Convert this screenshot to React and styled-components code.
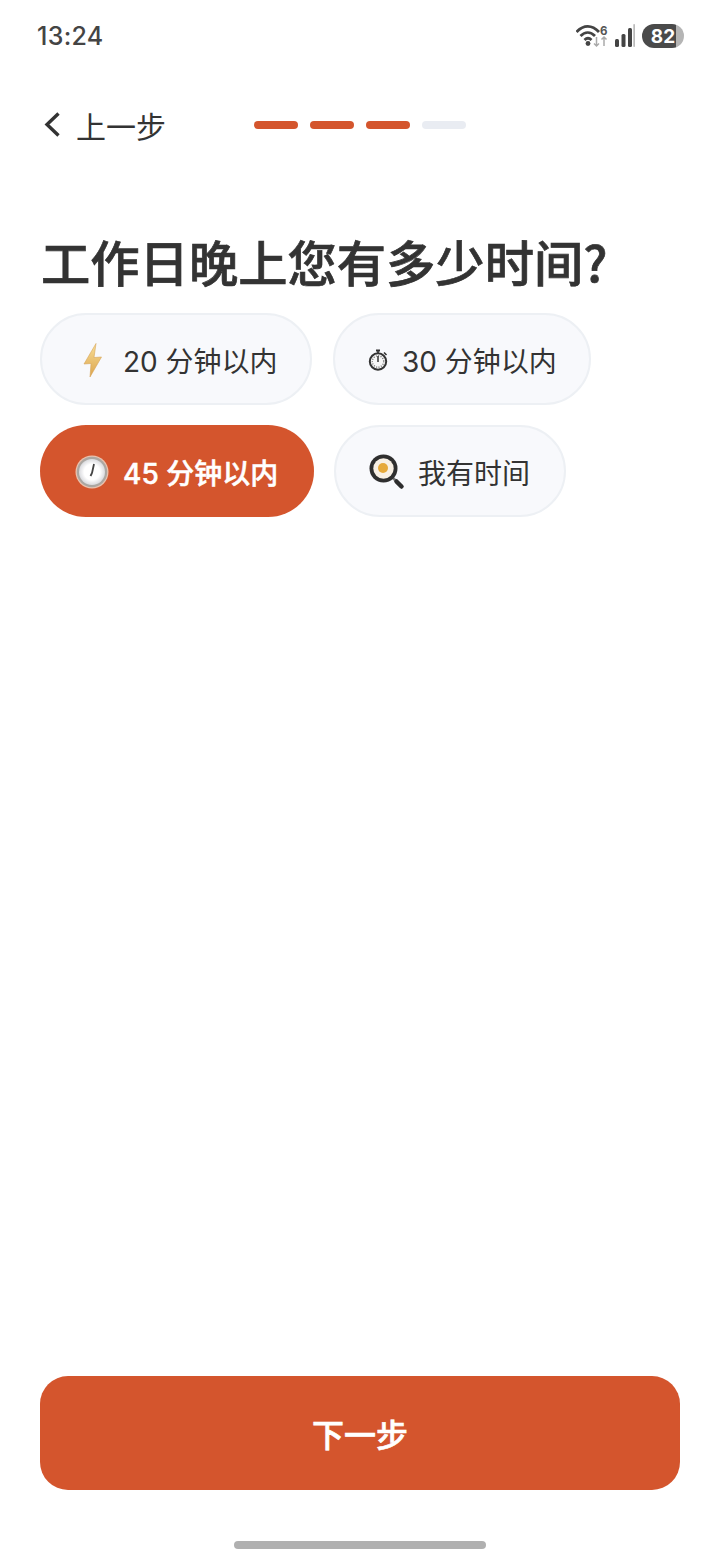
import React from "react";
import styled, { createGlobalStyle } from "styled-components";

const Global = createGlobalStyle`
  html, body { margin: 0; padding: 0; background: #fff; }
  #root { width: 720px; height: 1560px; }
`;
const CJK = `"Noto Sans CJK SC", "Noto Sans", sans-serif`;
const Page = styled.div`
  width: 720px; height: 1560px; display: flex; flex-direction: column; background: #fff;
  font-family: "Inter", ${CJK}; color: #333; box-sizing: border-box;
`;
const StatusBar = styled.div`
  height: 72px; padding: 0 36px 0 37px; display: flex; align-items: center; justify-content: space-between; flex-shrink: 0;
`;
const Time = styled.div`font: 500 25px "Inter", sans-serif; color: #444; letter-spacing: 0.3px;`;
const StatusIcons = styled.div`display: flex; align-items: center; gap: 7px;`;
const Battery = styled.div`
  width: 42px; height: 24px; border-radius: 12px; display: flex; align-items: center; justify-content: center;
  background: linear-gradient(90deg, #4a4a4a 82%, #b5b5b5 82%);
  color: #fff; font: 700 19px "Inter", sans-serif;
`;
const Header = styled.div`display: flex; align-items: center; height: 46px; margin-top: 31px; padding-left: 40px;`;
const Back = styled.div`display: flex; align-items: center; width: 214px; gap: 10px; font-size: 30px; color: #333;`;
const BackLabel = styled.span`margin-bottom: 2px;`;
const ChevronSvg = styled.svg`margin-top: -2px; flex-shrink: 0;`;
const Steps = styled.div`display: flex; gap: 12px; margin-top: -3px;`;
const Step = styled.div`width: 44px; height: 8px; border-radius: 4px; background: ${p => p.$on ? "#d4552d" : "#e9ecf2"};`;
const Title = styled.h1`
  margin: 82px 0 0 41px; font: 500 49.3px/60px ${CJK}; color: #333; white-space: nowrap;
  -webkit-text-stroke: 0.7px #333;
`;
const Options = styled.div`display: flex; flex-direction: column; gap: 20px; padding: 0 40px; margin-top: 22px;`;
const Row = styled.div`display: flex; gap: ${p => p.$gap}px;`;
const Chip = styled.div`
  box-sizing: border-box; height: 92px; width: ${p => p.$w}px; border-radius: 46px;
  display: flex; align-items: center; padding: 2px 0 0 ${p => p.$pl}px; gap: ${p => p.$gap}px;
  background: ${p => p.$on ? "#d4552d" : "#f8f9fc"};
  border: ${p => p.$on ? "none" : "2px solid #edf0f4"};
  color: ${p => p.$on ? "#fff" : "#333"};
  font-size: 28px; font-weight: ${p => p.$on ? 500 : 400}; white-space: nowrap;
  -webkit-text-stroke: ${p => p.$on ? "0.5px #fff" : "0"};
`;
const Spacer = styled.div`flex: 1;`;
const Next = styled.div`
  margin: 0 40px; height: 114px; border-radius: 28px; background: #d4552d; color: #fff;
  display: flex; align-items: center; justify-content: center; font-size: 32px; font-weight: 500; flex-shrink: 0;
  -webkit-text-stroke: 0.6px #fff;
`;
const HomeBar = styled.div`width: 252px; height: 8px; border-radius: 4px; background: #b0b0b0; margin: 51px auto 11px; flex-shrink: 0;`;

const Bolt = () => (
  <svg width="20" height="34" viewBox="0 0 20 34">
    <defs><linearGradient id="b" x1="0" y1="0" x2="0" y2="1"><stop offset="0" stopColor="#f8df98"/><stop offset="1" stopColor="#dca44c"/></linearGradient></defs>
    <path d="M13 0.5 L1 21 L8 20.5 L7 34 L18.5 14 L11 14.5 Z" fill="url(#b)" stroke="#d6a557" strokeWidth="0.6"/>
  </svg>
);
const Stopwatch = () => (
  <svg width="20" height="22" viewBox="0 0 20 22">
    <circle cx="10" cy="12.5" r="8.2" fill="#f7f7f7" stroke="#333" strokeWidth="2"/>
    <circle cx="10" cy="12.5" r="5.7" fill="none" stroke="#777" strokeWidth="1.4" strokeDasharray="1 1.4"/>
    <rect x="8" y="0.5" width="4" height="2" fill="#333"/><rect x="9.2" y="2" width="1.6" height="2.5" fill="#333"/>
    <path d="M16 3.5 L18.5 6" stroke="#333" strokeWidth="1.6"/>
    <path d="M10 7 L10 13" stroke="#333" strokeWidth="1.5"/>
  </svg>
);
const Clock = () => (
  <svg width="34" height="34" viewBox="0 0 34 34">
    <defs><radialGradient id="c"><stop offset="0.6" stopColor="#fff"/><stop offset="1" stopColor="#d9dade"/></radialGradient></defs>
    <circle cx="17" cy="17" r="16.5" fill="#eac1ad"/>
    <circle cx="17" cy="17" r="15.2" fill="#aba7a2"/><circle cx="17" cy="17" r="13" fill="url(#c)"/>
    <path d="M17 18 L19 9 M17 18 L15.5 21" stroke="#444" strokeWidth="1.8"/>
  </svg>
);
const Pan = () => (
  <svg width="36" height="36" viewBox="0 0 36 36">
    <path d="M24 24 L28 28" stroke="#777" strokeWidth="2.5"/>
    <path d="M27.5 27.5 L32.5 32.5" stroke="#2d2d2d" strokeWidth="4.5" strokeLinecap="round"/>
    <circle cx="14.5" cy="14.5" r="14" fill="#2f2f2f"/>
    <circle cx="14.5" cy="14.5" r="10.2" fill="#f8f0e4"/>
    <circle cx="14" cy="14" r="5" fill="#e6a93a"/>
  </svg>
);
const Chevron = () => (
  <ChevronSvg width="26" height="30" viewBox="0 0 26 30">
    <path d="M18.5 3.5 L7 14.5 L18.5 25.5" fill="none" stroke="#333" strokeWidth="3.4"/>
  </ChevronSvg>
);
const Wifi = () => (
  <svg width="32" height="24" viewBox="0 0 32 24">
    <path d="M0.5 8 C7.5 0.5 16 0.5 23 8 M4.5 12 C9 7.5 14.5 7.5 19 12 M8.5 16 C10.8 13.8 13.2 13.8 15.5 16" fill="none" stroke="#444" strokeWidth="2.8"/>
    <circle cx="12" cy="19.5" r="2.4" fill="#444"/>
    <text x="24" y="10.5" fontSize="11.5" fontWeight="700" fontFamily="Inter" fill="#555">6</text>
    <path d="M20.5 13 V22 M18 19.5 L20.5 22 L23 19.5 M28 22 V13 M25.5 15.5 L28 13 L30.5 15.5" fill="none" stroke="#aaa" strokeWidth="1.5"/>
  </svg>
);
const Signal = () => (
  <svg width="20" height="24" viewBox="0 0 20 24">
    <rect x="0" y="15" width="4" height="8" rx="1.5" fill="#444"/>
    <rect x="6.5" y="10" width="4" height="13" rx="1.5" fill="#444"/>
    <rect x="13" y="4" width="4" height="19" rx="1.5" fill="#444"/>
    <rect x="18.3" y="0" width="1.7" height="23" rx="0.8" fill="#bbb"/>
  </svg>
);

export default function App() {
  return (
    <Page>
      <Global />
      <StatusBar>
        <Time>13:24</Time>
        <StatusIcons><Wifi /><Signal /><Battery>82</Battery></StatusIcons>
      </StatusBar>
      <Header>
        <Back><Chevron /><BackLabel>上一步</BackLabel></Back>
        <Steps><Step $on /><Step $on /><Step $on /><Step /></Steps>
      </Header>
      <Title>工作日晚上您有多少时间?</Title>
      <Options>
        <Row $gap={21}>
          <Chip $w={272} $pl={41} $gap={20}><Bolt />20 分钟以内</Chip>
          <Chip $w={258} $pl={33} $gap={14}><Stopwatch />30 分钟以内</Chip>
        </Row>
        <Row $gap={20}>
          <Chip $on $w={274} $pl={35} $gap={14}><Clock />45 分钟以内</Chip>
          <Chip $w={232} $pl={33} $gap={13}><Pan />我有时间</Chip>
        </Row>
      </Options>
      <Spacer />
      <Next>下一步</Next>
      <HomeBar />
    </Page>
  );
}
